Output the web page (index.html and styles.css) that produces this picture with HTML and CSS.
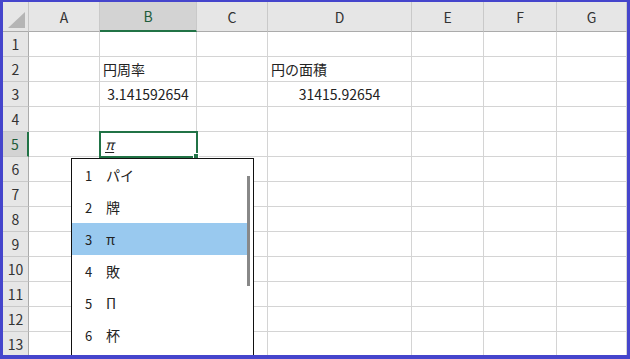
FILE: index.html
```html
<!DOCTYPE html>
<html lang="ja">
<head>
    <meta charset="UTF-8">
    <title>円周率</title>
    <link rel="stylesheet" href="styles.css">
</head>
<body>
    <div class="frame">
        <div class="sheet">
            <!-- 列見出し -->
            <div class="corner"></div>
            <div class="col-head">A</div>
            <div class="col-head active">B</div>
            <div class="col-head">C</div>
            <div class="col-head">D</div>
            <div class="col-head">E</div>
            <div class="col-head">F</div>
            <div class="col-head">G</div>

            <div class="row-head">1</div>
            <div class="cell"></div><div class="cell"></div><div class="cell"></div><div class="cell"></div><div class="cell"></div><div class="cell"></div><div class="cell"></div>

            <div class="row-head">2</div>
            <div class="cell"></div><div class="cell">円周率</div><div class="cell"></div><div class="cell">円の面積</div><div class="cell"></div><div class="cell"></div><div class="cell"></div>

            <div class="row-head">3</div>
            <div class="cell"></div><div class="cell num">3.141592654</div><div class="cell"></div><div class="cell num">31415.92654</div><div class="cell"></div><div class="cell"></div><div class="cell"></div>

            <div class="row-head">4</div>
            <div class="cell"></div><div class="cell"></div><div class="cell"></div><div class="cell"></div><div class="cell"></div><div class="cell"></div><div class="cell"></div>

            <div class="row-head active">5</div>
            <div class="cell"></div><div class="cell selected"><span class="composing">π</span></div><div class="cell"></div><div class="cell"></div><div class="cell"></div><div class="cell"></div><div class="cell"></div>

            <div class="row-head">6</div>
            <div class="cell"></div><div class="cell"></div><div class="cell"></div><div class="cell"></div><div class="cell"></div><div class="cell"></div><div class="cell"></div>

            <div class="row-head">7</div>
            <div class="cell"></div><div class="cell"></div><div class="cell"></div><div class="cell"></div><div class="cell"></div><div class="cell"></div><div class="cell"></div>

            <div class="row-head">8</div>
            <div class="cell"></div><div class="cell"></div><div class="cell"></div><div class="cell"></div><div class="cell"></div><div class="cell"></div><div class="cell"></div>

            <div class="row-head">9</div>
            <div class="cell"></div><div class="cell"></div><div class="cell"></div><div class="cell"></div><div class="cell"></div><div class="cell"></div><div class="cell"></div>

            <div class="row-head">10</div>
            <div class="cell"></div><div class="cell"></div><div class="cell"></div><div class="cell"></div><div class="cell"></div><div class="cell"></div><div class="cell"></div>

            <div class="row-head">11</div>
            <div class="cell"></div><div class="cell"></div><div class="cell"></div><div class="cell"></div><div class="cell"></div><div class="cell"></div><div class="cell"></div>

            <div class="row-head">12</div>
            <div class="cell"></div><div class="cell"></div><div class="cell"></div><div class="cell"></div><div class="cell"></div><div class="cell"></div><div class="cell"></div>

            <div class="row-head">13</div>
            <div class="cell"></div><div class="cell"></div><div class="cell"></div><div class="cell"></div><div class="cell"></div><div class="cell"></div><div class="cell"></div>
        </div>

        <!-- IME 変換候補 -->
        <div class="candidates">
            <div class="candidate"><span class="idx">1</span><span>パイ</span></div>
            <div class="candidate"><span class="idx">2</span><span>牌</span></div>
            <div class="candidate current"><span class="idx">3</span><span>π</span></div>
            <div class="candidate"><span class="idx">4</span><span>敗</span></div>
            <div class="candidate"><span class="idx">5</span><span>Π</span></div>
            <div class="candidate"><span class="idx">6</span><span>杯</span></div>
            <div class="scrollbar"></div>
        </div>
    </div>
</body>
</html>
```

FILE: styles.css
```css
body {
    margin: 0;
    font-family: "Noto Sans CJK JP", "Noto Sans", sans-serif;
    color: #222;
}

.frame {
    position: relative;
    width: 630px;
    height: 359px;
    box-sizing: border-box;
    border: 3px solid #4545cc;
    border-top-width: 2px;
    border-bottom-width: 4px;
    overflow: hidden;
    background: #fff;
}

.sheet {
    display: grid;
    grid-template-columns: 26px 71px 97px 71px 144px 72px 73px 70px;
    grid-template-rows: 30px repeat(13, 25px);
}

.corner {
    background: #e6e6e6;
    border-right: 1px solid #c6c6c6;
    border-bottom: 1px solid #ababab;
    position: relative;
}

.corner::after {
    content: '';
    position: absolute;
    right: 3px;
    bottom: 3px;
    width: 0;
    height: 0;
    border-left: 17px solid transparent;
    border-bottom: 16px solid #b5b5b5;
}

.col-head {
    background: #e6e6e6;
    border-right: 1px solid #c9c9c9;
    border-bottom: 1px solid #ababab;
    display: flex;
    align-items: center;
    justify-content: center;
    font-size: 14px;
    color: #333;
}

.col-head.active {
    background: #d3d3d3;
    border-bottom: 2px solid #217346;
    color: #1e5c3a;
}

.row-head {
    background: #e6e6e6;
    border-right: 1px solid #ababab;
    border-bottom: 1px solid #c9c9c9;
    display: flex;
    align-items: center;
    justify-content: center;
    font-size: 14px;
    color: #333;
}

.row-head.active {
    background: #d3d3d3;
    border-right: 2px solid #217346;
    color: #1e5c3a;
}

.cell {
    border-right: 1px solid #d4d4d4;
    border-bottom: 1px solid #d4d4d4;
    display: flex;
    align-items: center;
    padding-left: 3px;
    font-size: 14px;
    white-space: nowrap;
}

.cell.num {
    justify-content: center;
    padding-left: 0;
}

.cell.selected {
    position: relative;
    outline: 2px solid #217346;
    outline-offset: -1px;
    z-index: 1;
}

.cell.selected::after {
    content: '';
    position: absolute;
    right: -3px;
    bottom: -3px;
    width: 4px;
    height: 4px;
    background: #217346;
    border: 1px solid #fff;
}

.composing {
    text-decoration: underline;
    text-underline-offset: 2px;
    font-style: italic;
    padding-left: 2px;
}

.candidates {
    position: absolute;
    left: 68px;
    top: 156px;
    width: 181px;
    height: 200px;
    background: #fff;
    border: 1px solid #111;
    z-index: 2;
}

.candidate {
    height: 32px;
    display: flex;
    align-items: center;
    font-size: 14px;
    margin-right: 6px;
}

.candidate .idx {
    width: 34px;
    padding-left: 13px;
    box-sizing: border-box;
    font-size: 13px;
}

.candidate.current {
    background: #99c9ef;
}

.scrollbar {
    position: absolute;
    right: 3px;
    top: 17px;
    width: 3px;
    height: 110px;
    background: #888;
}
```
